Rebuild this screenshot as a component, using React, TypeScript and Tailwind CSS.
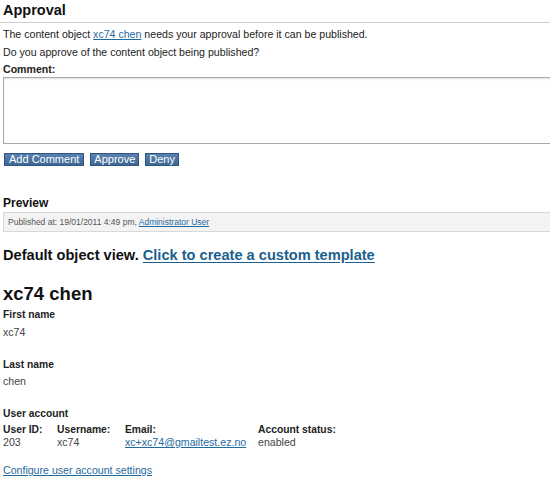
import React from "react";

const link = "text-[#1f6a9e] underline underline-offset-1";
const btn = "h-[13px] px-[4px] text-[11px] leading-[11px] text-white bg-gradient-to-b from-[#5a82b0] to-[#3f6794] border border-[#2f5481]";

export default function App() {
  return (
    <div className="w-[550px] h-[498px] overflow-hidden bg-white text-[#222]" style={{ fontFamily: '"Liberation Sans", Arial, sans-serif' }}>
      <div className="w-[580px]">
        <h2 className="mt-[1px] pl-[3px] text-[14.5px] leading-[18px] font-bold text-[#111]">Approval</h2>
        <div className="mt-[3px] h-[1px] bg-[#cfcfcf]" />
        <p className="mt-[2px] pl-[3px] text-[10.6px] leading-[18px]">
          The content object <a className={link}>xc74 chen</a> needs your approval before it can be published.
        </p>
        <p className="pl-[3px] text-[10.6px] leading-[18px]">Do you approve of the content object being published?</p>
        <p className="pl-[3px] text-[10.6px] leading-[16px] font-bold">Comment:</p>
        <div className="ml-[3px] h-[67px] border border-[#aaaaaa] shadow-[inset_0_1px_2px_rgba(0,0,0,0.12)] bg-white" />
        <div className="mt-[9px] pl-[4px] flex gap-[6px]">
          <button className={btn}>Add Comment</button>
          <button className={"h-[13px] px-[3px] text-[11px] leading-[11px] text-white bg-gradient-to-b from-[#5a82b0] to-[#3f6794] border border-[#2f5481]"}>Approve</button>
          <button className={"h-[13px] px-[3px] text-[11px] leading-[11px] text-white bg-gradient-to-b from-[#5a82b0] to-[#3f6794] border border-[#2f5481]"}>Deny</button>
        </div>
        <h3 className="mt-[30px] pl-[3px] text-[12px] leading-[14px] font-bold text-[#111]">Preview</h3>
        <div className="mt-[2px] ml-[3px] h-[20px] border border-[#d8d8d8] bg-[#f3f3f3] pl-[4px] text-[8.5px] leading-[18px] text-[#555]">
          Published at: 19/01/2011 4:49 pm, <a className={link}>Administrator User</a>
        </div>
        <h2 className="mt-[14px] pl-[3px] text-[14.6px] leading-[18px] font-bold text-[#111]">
          Default object view. <a className="text-[#1b5f8f] underline underline-offset-2">Click to create a custom template</a>
        </h2>
        <h1 className="mt-[19px] pl-[3px] text-[18.5px] leading-[22px] font-bold text-[#111]">xc74 chen</h1>
        <p className="mt-[3px] pl-[3px] text-[10.3px] leading-[14px] font-bold">First name</p>
        <p className="mt-[3px] pl-[3px] text-[10.6px] leading-[14px] text-[#444]">xc74</p>
        <p className="mt-[19px] pl-[3px] text-[10.3px] leading-[14px] font-bold">Last name</p>
        <p className="mt-[2px] pl-[3px] text-[10.6px] leading-[14px] text-[#444]">chen</p>
        <p className="mt-[19px] pl-[3px] text-[10.3px] leading-[14px] font-bold">User account</p>
        <div className="mt-[3px] pl-[3px] grid grid-cols-[54px_68px_133px_auto] text-[10.3px] leading-[12px]">
          <span className="font-bold">User ID:</span>
          <span className="font-bold">Username:</span>
          <span className="font-bold">Email:</span>
          <span className="font-bold">Account status:</span>
          <span className="text-[#444] text-[10.6px]">203</span>
          <span className="text-[#444] text-[10.6px]">xc74</span>
          <span className="text-[10.6px]"><a className={link}>xc+xc74@gmailtest.ez.no</a></span>
          <span className="text-[#444] text-[10.6px]">enabled</span>
        </div>
        <p className="mt-[15px] pl-[3px] text-[10.6px] leading-[14px]">
          <a className={link}>Configure user account settings</a>
        </p>
      </div>
    </div>
  );
}
